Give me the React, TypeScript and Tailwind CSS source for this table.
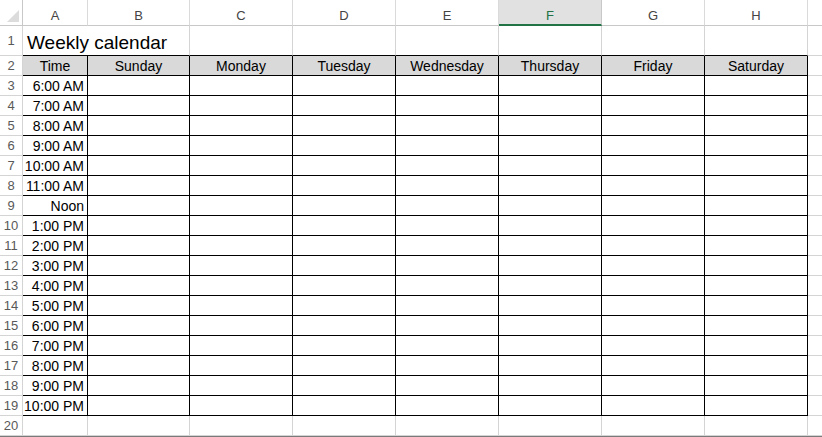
const cols = ['A', 'B', 'C', 'D', 'E', 'F', 'G', 'H']
const days = ['Sunday', 'Monday', 'Tuesday', 'Wednesday', 'Thursday', 'Friday', 'Saturday']
const times = [
  '6:00 AM', '7:00 AM', '8:00 AM', '9:00 AM', '10:00 AM', '11:00 AM', 'Noon',
  '1:00 PM', '2:00 PM', '3:00 PM', '4:00 PM', '5:00 PM', '6:00 PM', '7:00 PM',
  '8:00 PM', '9:00 PM', '10:00 PM',
]

const font = { fontFamily: '"Liberation Sans", Arial, sans-serif' }

function RowNum({ n, h = 'h-5' }: { n: number; h?: string }) {
  return (
    <div className={`${h} flex items-center justify-center pt-px border-r border-b border-[#d4d4d4] text-[13px] text-[#595959]`}>
      {n}
    </div>
  )
}

export default function App() {
  return (
    <div className="w-[822px] h-[437px] overflow-hidden bg-white" style={font}>
      <div className="grid grid-cols-[23px_65px_102px_103px_103px_103px_103px_103px_103px_14px]">
        {/* column headers */}
        <div className="h-[26px] relative border-r border-b border-[#c8c8c8] bg-white">
          <div className="absolute right-[3px] bottom-[3px] w-0 h-0 border-l-[12px] border-l-transparent border-b-[12px] border-b-[#dcdcdc]" />
        </div>
        {cols.map((c) =>
          c === 'F' ? (
            <div key={c} className="h-[26px] flex items-center justify-center pt-[7px] bg-[#e1e1e1] border-r border-[#c8c8c8] border-b-2 border-b-[#217346] text-[13px] text-[#217346]">
              {c}
            </div>
          ) : (
            <div key={c} className="h-[26px] flex items-center justify-center pt-[7px] border-r border-b border-[#dadada] border-b-[#c8c8c8] text-[13px] text-[#444]">
              {c}
            </div>
          )
        )}
        <div className="h-[26px] border-b border-[#c8c8c8]" />

        {/* row 1 */}
        <RowNum n={1} h="h-[30px]" />
        <div className="col-span-8 h-[30px] flex">
          <div className="w-[65px] shrink-0 border-b border-black relative">
            <span className="absolute left-[4px] bottom-0 whitespace-nowrap text-[19px] text-black leading-none pb-[3px]">
              Weekly calendar
            </span>
          </div>
          <div className="w-[102px] shrink-0 border-r border-b border-[#d4d4d4] border-b-black" />
          {[0, 1, 2, 3, 4, 5].map((i) => (
            <div key={i} className="w-[103px] shrink-0 border-r border-b border-[#d4d4d4] border-b-black" />
          ))}
        </div>
        <div className="h-[30px] border-b border-[#d4d4d4]" />

        {/* row 2 */}
        <RowNum n={2} />
        <div className="h-5 flex items-center justify-center pt-px bg-[#d9d9d9] border-r border-b border-black text-[14px] text-black">
          Time
        </div>
        {days.map((d) => (
          <div key={d} className="h-5 flex items-center justify-center pt-px bg-[#d9d9d9] border-r border-b border-black text-[14px] text-black">
            {d}
          </div>
        ))}
        <div className="h-5 border-b border-[#d4d4d4]" />

        {/* time rows */}
        {times.map((t, i) => (
          <div key={t} className="contents">
            <RowNum n={i + 3} />
            <div className="h-5 flex items-center justify-end pt-px pr-[3px] border-r border-b border-black text-[14px] text-black whitespace-nowrap">
              {t}
            </div>
            {days.map((d) => (
              <div key={d} className="h-5 border-r border-b border-black" />
            ))}
            <div className="h-5 border-b border-[#d4d4d4]" />
          </div>
        ))}

        {/* row 20 */}
        <RowNum n={20} />
        {cols.map((c) => (
          <div key={c} className="h-5 border-r border-b border-[#d4d4d4]" />
        ))}
        <div className="h-5 border-b border-[#d4d4d4]" />
      </div>
      <div className="h-px bg-[#7a7a7a]" />
    </div>
  )
}
